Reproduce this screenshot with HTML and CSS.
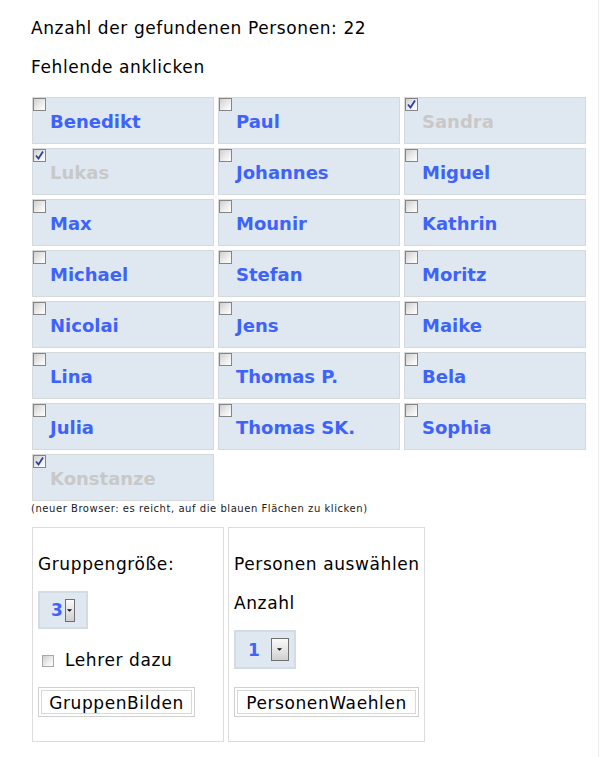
FILE: index.html
```html
<!DOCTYPE html>
<html lang="de">
<head>
<meta charset="utf-8">
<link rel="stylesheet" href="styles.css">
</head>
<body>
<div class="page">
  <p class="line first">Anzahl der gefundenen Personen: 22</p>
  <p class="line second">Fehlende anklicken</p>
  <div class="grid">
    <div class="cell"><span class="cb"></span><div class="name">Benedikt</div></div>
    <div class="cell"><span class="cb"></span><div class="name">Paul</div></div>
    <div class="cell off"><span class="cb checked"><svg viewBox="0 0 11 11"><path d="M2 5.5 L4.5 8.5 L9 1.5" fill="none" stroke="#2c3f9a" stroke-width="1.8"/></svg></span><div class="name">Sandra</div></div>
    <div class="cell off"><span class="cb checked"><svg viewBox="0 0 11 11"><path d="M2 5.5 L4.5 8.5 L9 1.5" fill="none" stroke="#2c3f9a" stroke-width="1.8"/></svg></span><div class="name">Lukas</div></div>
    <div class="cell"><span class="cb"></span><div class="name">Johannes</div></div>
    <div class="cell"><span class="cb"></span><div class="name">Miguel</div></div>
    <div class="cell"><span class="cb"></span><div class="name">Max</div></div>
    <div class="cell"><span class="cb"></span><div class="name">Mounir</div></div>
    <div class="cell"><span class="cb"></span><div class="name">Kathrin</div></div>
    <div class="cell"><span class="cb"></span><div class="name">Michael</div></div>
    <div class="cell"><span class="cb"></span><div class="name">Stefan</div></div>
    <div class="cell"><span class="cb"></span><div class="name">Moritz</div></div>
    <div class="cell"><span class="cb"></span><div class="name">Nicolai</div></div>
    <div class="cell"><span class="cb"></span><div class="name">Jens</div></div>
    <div class="cell"><span class="cb"></span><div class="name">Maike</div></div>
    <div class="cell"><span class="cb"></span><div class="name">Lina</div></div>
    <div class="cell"><span class="cb"></span><div class="name">Thomas P.</div></div>
    <div class="cell"><span class="cb"></span><div class="name">Bela</div></div>
    <div class="cell"><span class="cb"></span><div class="name">Julia</div></div>
    <div class="cell"><span class="cb"></span><div class="name">Thomas SK.</div></div>
    <div class="cell"><span class="cb"></span><div class="name">Sophia</div></div>
    <div class="cell off"><span class="cb checked"><svg viewBox="0 0 11 11"><path d="M2 5.5 L4.5 8.5 L9 1.5" fill="none" stroke="#2c3f9a" stroke-width="1.8"/></svg></span><div class="name">Konstanze</div></div>
  </div>
  <p class="hint">(neuer Browser: es reicht, auf die blauen Flächen zu klicken)</p>
  <div class="boxes">
    <div class="box left">
      <div class="txt head">Gruppengröße:</div>
      <div class="select narrow"><span class="val">3</span><span class="drop"><svg viewBox="0 0 8 5"><path d="M1 1 L4 4 L7 1 Z" fill="#111"/></svg></span></div>
      <div class="check-row"><span class="cb small"></span><span class="txt">Lehrer dazu</span></div>
      <div class="btn w1">GruppenBilden</div>
    </div>
    <div class="box right">
      <div class="txt head">Personen auswählen</div>
      <div class="txt anz">Anzahl</div>
      <div class="select wide"><span class="val">1</span><span class="drop"><svg viewBox="0 0 8 5"><path d="M1 1 L4 4 L7 1 Z" fill="#111"/></svg></span></div>
      <div class="btn w2">PersonenWaehlen</div>
    </div>
  </div>
</div>
</body>
</html>
```
FILE: styles.css
```css
html, body {
  margin: 0;
  padding: 0;
  background: #fff;
}
.page {
  width: 599px;
  min-height: 757px;
  border-right: 1px solid #ececec;
  padding-left: 31px;
  box-sizing: border-box;
  font-family: "DejaVu Sans", Verdana, sans-serif;
  color: #000;
  overflow: hidden;
}
.line {
  margin: 0;
  font-size: 17px;
  line-height: 19px;
  letter-spacing: 0.6px;
}
.first { padding-top: 19px; }
.second { margin-top: 20px; }
.grid {
  margin-top: 20px;
  margin-left: 1px;
  display: grid;
  grid-template-columns: repeat(3, 182px);
  grid-auto-rows: 47px;
  gap: 4px;
}
.cell {
  background: #dfe8f1;
  border: 1px solid #d6d9dc;
  box-sizing: border-box;
}
.cb {
  display: block;
  width: 13px;
  height: 13px;
  box-sizing: border-box;
  border: 1px solid #858585;
  background: linear-gradient(135deg, #cfcfcf 0%, #ececec 55%, #ffffff 100%);
}
.cb svg {
  display: block;
  width: 11px;
  height: 11px;
}
.name {
  padding-left: 17px;
  font-size: 18px;
  font-weight: bold;
  line-height: 21px;
  color: #3d63fb;
  white-space: nowrap;
}
.off .name { color: #c8c8c8; }
.hint {
  margin: 2px 0 0 0;
  font-size: 10px;
  line-height: 12px;
  letter-spacing: 0.55px;
  color: #1a1a1a;
}
.boxes {
  margin-top: 12px;
  margin-left: 1px;
  display: flex;
  gap: 4px;
}
.box {
  border: 1px solid #dcdcdc;
  height: 215px;
  box-sizing: border-box;
  padding: 27px 5px 0 5px;
  display: flex;
  flex-direction: column;
  align-items: flex-start;
}
.box.left { width: 192px; }
.box.right { width: 197px; }
.txt {
  font-size: 17px;
  line-height: 19px;
  letter-spacing: 0.6px;
  white-space: nowrap;
}
.select {
  box-sizing: border-box;
  height: 38px;
  background: #dfe8f1;
  border: 2px solid #d3dbe3;
  display: flex;
  align-items: center;
  position: relative;
}
.select .val {
  font-size: 17px;
  font-weight: bold;
  color: #3d63fb;
}
.select .drop {
  box-sizing: border-box;
  height: 23px;
  border: 1px solid #6f6f6f;
  background: linear-gradient(180deg, #fafafa 0%, #e6e6e6 50%, #cfcfcf 100%);
  display: flex;
  align-items: center;
  justify-content: center;
}
.select .drop svg { width: 7px; height: 5px; display: block; }
.select.narrow {
  width: 50px;
  margin-top: 17px;
  padding-left: 11px;
}
.select.narrow .drop { width: 10px; margin-left: 2px; }
.select.wide {
  width: 62px;
  height: 39px;
  margin-top: 17px;
  padding-left: 12px;
}
.select.wide .drop { width: 18px; margin-left: 11px; }
.check-row {
  margin-top: 22px;
  display: flex;
  align-items: center;
  padding-left: 4px;
}
.cb.small {
  width: 12px;
  height: 12px;
  border-color: #a8a8a8;
  margin-top: 1px;
  margin-right: 11px;
}
.anz { margin-top: 20px; }
.btn {
  box-sizing: border-box;
  height: 30px;
  padding-top: 2px;
  border: 1px solid #cfcfcf;
  box-shadow: inset 0 0 0 2px #fff, inset 0 0 0 3px #d8d8d8;
  font-size: 17px;
  line-height: 26px;
  letter-spacing: 0.6px;
  text-align: center;
  white-space: nowrap;
  background: #fff;
}
.btn.w1 { width: 157px; margin-top: 17px; }
.btn.w2 { width: 185px; margin-top: 18px; }
```
